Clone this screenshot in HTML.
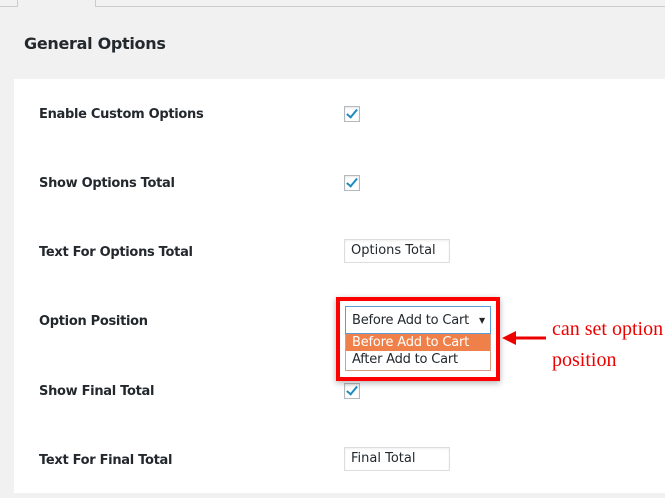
<!DOCTYPE html>
<html><head><style>
body{margin:0;width:665px;height:498px;background:#f1f1f1;font-family:"DejaVu Sans","Liberation Sans",sans-serif;position:relative;overflow:hidden;color:#23282d}
.a{position:absolute}
.lbl{position:absolute;left:39px;font-size:13px;font-weight:bold;letter-spacing:-0.3px}
.cb{position:absolute;left:344px;width:14px;height:14px;border:1px solid #b4b9be;background:#fff;box-shadow:inset 0 1px 2px rgba(0,0,0,.1)}
.cb:after{content:"";position:absolute;left:4px;top:0px;width:4px;height:9px;border:solid #1e8cbe;border-width:0 2.5px 2.5px 0;transform:rotate(40deg)}
.inp{position:absolute;left:344px;width:98px;height:22px;border:1px solid #ddd;background:#fff;font-size:13px;line-height:22px;padding-left:6px;box-shadow:inset 0 1px 2px rgba(0,0,0,.07)}
</style></head><body>
<div class="a" style="left:0;top:6px;width:665px;border-top:1px solid #ccc"></div>
<div class="a" style="left:17px;top:0;width:77px;height:7px;background:#f1f1f1;border-left:1px solid #ccc;border-right:1px solid #ccc"></div>
<div class="a" style="left:24px;top:34px;font-size:16px;font-weight:bold;letter-spacing:-0.3px">General Options</div>
<div class="a" style="left:14px;top:79px;width:651px;height:414px;background:#fff"></div>
<div class="lbl" style="top:107px">Enable Custom Options</div>
<div class="cb" style="top:106px"></div>
<div class="lbl" style="top:176px">Show Options Total</div>
<div class="cb" style="top:175px"></div>
<div class="lbl" style="top:245px">Text For Options Total</div>
<div class="inp" style="top:239px">Options Total</div>
<div class="lbl" style="top:314px">Option Position</div>
<div class="lbl" style="top:384px">Show Final Total</div>
<div class="cb" style="top:383px"></div>
<div class="lbl" style="top:453px">Text For Final Total</div>
<div class="inp" style="top:447px">Final Total</div>
<div class="a" style="left:336px;top:297px;width:156px;height:76px;border:4px solid #f00;background:#fff;box-shadow:0 2px 6px rgba(0,0,0,.3)"></div>
<div class="a" style="left:345px;top:306px;border:1px solid #5b9dd9;background:#fff;font-size:13px;line-height:27px;box-sizing:border-box;padding-left:6px;width:146px;height:28px;letter-spacing:-0.2px">Before Add to Cart<span style="position:absolute;right:5px;font-size:8px">▼</span></div>
<div class="a" style="left:345px;top:334px;width:144px;height:36px;border:1px solid #d4a088;border-top:none;background:#fff;font-size:13px;letter-spacing:-0.2px">
<div style="background:#f0804a;color:#fff;height:17px;line-height:17px;padding-left:6px">Before Add to Cart</div>
<div style="height:18px;line-height:18px;padding-left:6px">After Add to Cart</div></div>
<svg class="a" style="left:500px;top:328px" width="48" height="20"><path d="M12 10H46" stroke="#e00" stroke-width="3"/><path d="M2 10L16 3V17Z" fill="#e00"/></svg>
<div class="a" style="left:552px;top:314px;font-family:'Liberation Serif',serif;font-size:20px;color:#e00;line-height:31px">can set option<br>position</div>
</body></html>
